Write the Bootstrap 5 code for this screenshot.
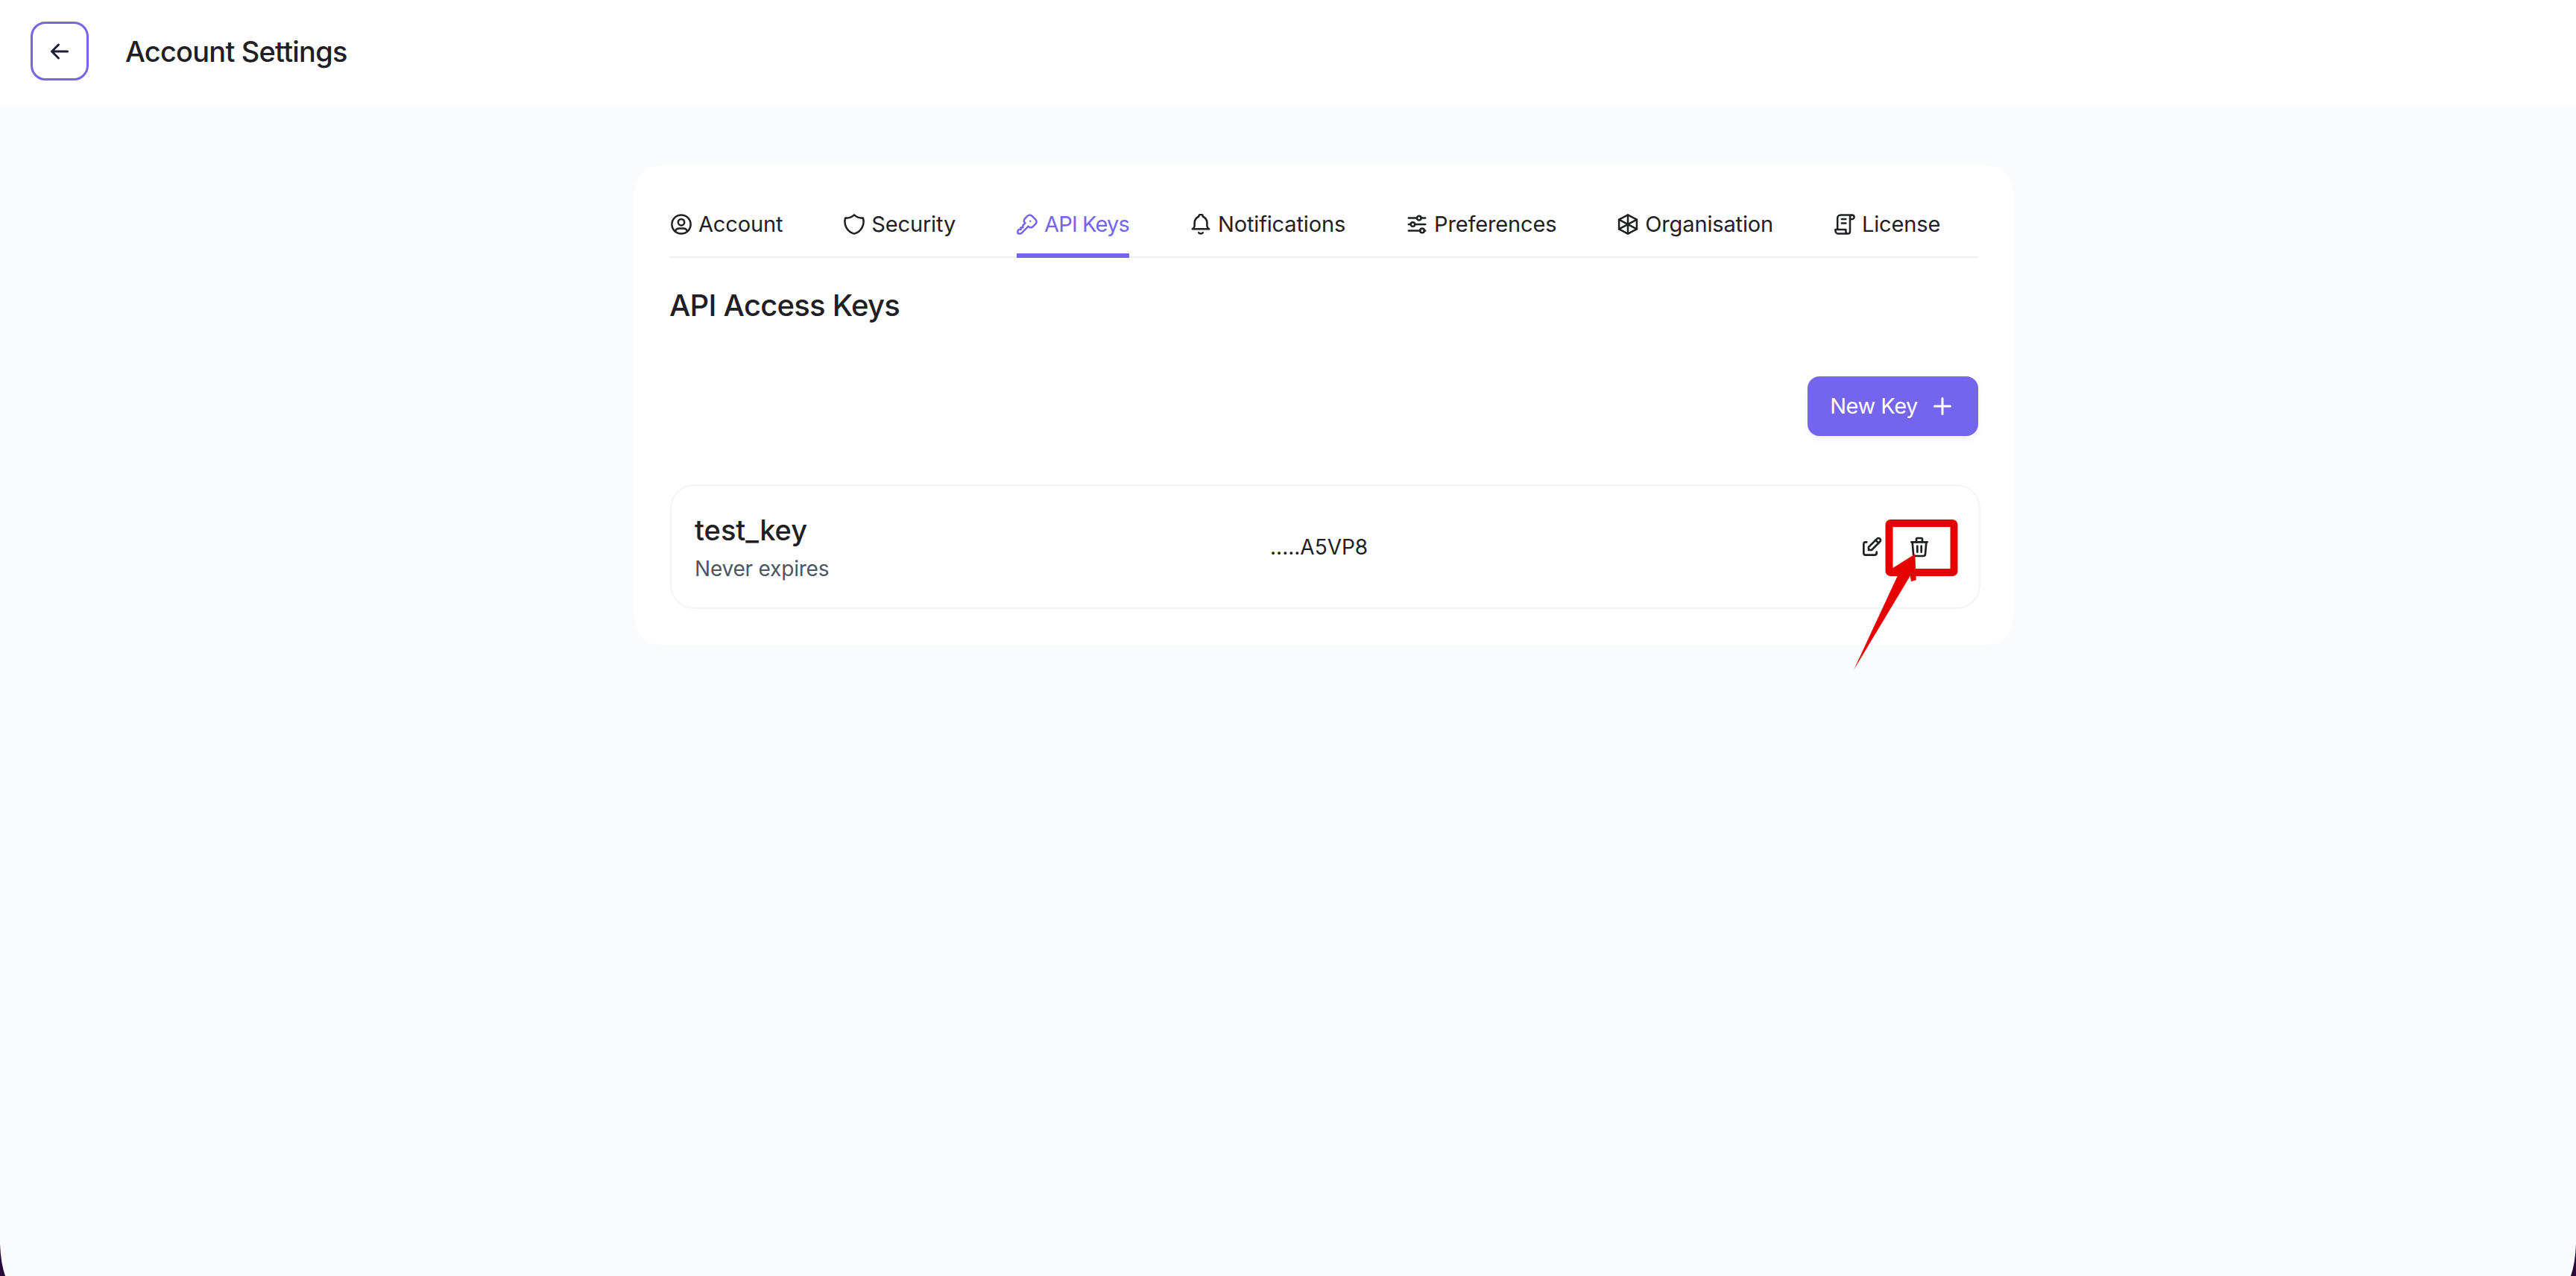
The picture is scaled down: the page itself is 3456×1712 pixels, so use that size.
<!DOCTYPE html>
<html lang="en">
<head>
  <meta charset="UTF-8">
  <meta name="viewport" content="width=device-width, initial-scale=1.0">
  <title>Account Settings</title>
  <link href="https://cdn.jsdelivr.net/npm/bootstrap@5.3.1/dist/css/bootstrap.min.css" rel="stylesheet">
  <style>
    body {
      background: #fafbfd;
      color: #1f2023;
      font-family: "Inter", "Liberation Sans", sans-serif;
      min-height: 1712px;
      overflow: hidden;
    }
    .ico {
      fill: none;
      stroke: currentColor;
      stroke-width: 2;
      stroke-linecap: round;
      stroke-linejoin: round;
      flex-shrink: 0;
    }
    .tab-ico {
      stroke-width: 1.8;
    }
    .top-bar {
      height: 141px;
      padding: 29px 0 0 41px;
      gap: 49px;
    }
    .back-btn {
      width: 78px;
      height: 79px;
      border: 3px solid #7565ec;
      border-radius: 20px;
      color: #1c2030;
      background: #fff;
    }
    .top-title {
      font-size: 38px;
      font-weight: 450;
      letter-spacing: -0.8px;
      line-height: 80px;
      margin: 0;
    }
    .page-wrap {
      padding: 81px 0 0 851px;
    }
    .panel-box {
      width: 1850px;
      height: 643px;
      background: #fff;
      border-radius: 36px;
      padding: 47px 47px 0 47px;
    }
    .tab-row {
      gap: 82px;
      padding-left: 2px;
      border-bottom: 2px solid #eff0f2;
    }
    .tab-link {
      display: flex;
      align-items: center;
      gap: 9px;
      height: 77px;
      padding-bottom: 8px;
      margin-bottom: -2px;
      border-bottom: 6px solid transparent;
      color: #1f2023;
      font-size: 29px;
      line-height: 40px;
      letter-spacing: -0.15px;
    }
    .tab-link.active {
      color: #7565ec;
      border-bottom-color: #7565ec;
      letter-spacing: -0.85px;
    }
    .panel-title {
      font-size: 40px;
      font-weight: 500;
      line-height: 48px;
      letter-spacing: -0.75px;
      margin: 40px 0 0;
    }
    .new-key {
      width: 229px;
      height: 80px;
      gap: 15px;
      margin-top: 71px;
      border: 0;
      border-radius: 16px;
      background: #7565ec;
      color: #fff;
      font-size: 29px;
      letter-spacing: -0.5px;
      box-shadow: 0 4px 8px rgba(117, 101, 236, .1);
    }
    .key-row {
      height: 167px;
      margin: 65px -3px 0 1px;
      padding: 0 64px 0 31px;
      border: 2px solid #f3f4f6;
      border-radius: 32px;
    }
    .key-info {
      width: 772px;
      padding-top: 4px;
    }
    .key-name {
      font-size: 38px;
      font-weight: 500;
      line-height: 44px;
    }
    .key-exp {
      font-size: 28px;
      line-height: 38px;
      letter-spacing: -0.2px;
      color: #4b5563;
      margin-top: 11px;
    }
    .key-val {
      font-size: 28px;
      line-height: 38px;
    }
    .row-actions {
      gap: 32px;
      color: #1f2023;
    }
    .marks {
      position: absolute;
      left: 0;
      top: 0;
      width: 3456px;
      height: 1712px;
      pointer-events: none;
    }
  </style>
</head>
<body>

<header class="top-bar d-flex align-items-start bg-white">
  <button class="back-btn d-flex align-items-center justify-content-center p-0" type="button" aria-label="Back">
    <svg class="ico" width="36" height="36" viewBox="0 0 24 24"><path d="M5 12h14M5 12l6 6M5 12l6-6"/></svg>
  </button>
  <h1 class="top-title">Account Settings</h1>
</header>

<div class="page-wrap">
  <div class="panel-box">
    <ul class="nav tab-row">
      <li><a class="tab-link text-decoration-none" href="#">
        <svg class="ico tab-ico" width="28" height="28" viewBox="2 2 20 20"><circle cx="12" cy="12" r="9"/><circle cx="12" cy="10" r="3"/><path d="M6.168 18.849a4 4 0 0 1 3.832-2.849h4a4 4 0 0 1 3.832 2.855"/></svg>
        Account</a></li>
      <li><a class="tab-link text-decoration-none" href="#">
        <svg class="ico tab-ico" width="28" height="28" viewBox="2 2 20 20"><path d="M12 3a12 12 0 0 0 8.500 3a12 12 0 0 1-8.500 15a12 12 0 0 1-8.500-15a12 12 0 0 0 8.500-3"/></svg>
        Security</a></li>
      <li><a class="tab-link active text-decoration-none" href="#">
        <svg class="ico tab-ico" width="28" height="28" viewBox="2 2 20 20"><path d="M16.555 3.843l3.602 3.602a2.877 2.877 0 0 1 0 4.069l-2.643 2.643a2.877 2.877 0 0 1-4.069 0l-.301-.301l-6.558 6.558a2 2 0 0 1-1.239 .578l-.175 .008h-1.172a1 1 0 0 1-.993-.883l-.007-.117v-1.172a2 2 0 0 1 .467-1.284l.119-.13l.414-.414h2v-2h2v-2l2.144-2.144l-.301-.301a2.877 2.877 0 0 1 0-4.069l2.643-2.643a2.877 2.877 0 0 1 4.069 0z"/><path d="M15 9h.01"/></svg>
        API Keys</a></li>
      <li><a class="tab-link text-decoration-none" href="#">
        <svg class="ico tab-ico" width="28" height="28" viewBox="2 2 20 20"><path d="M10 4.500a2 2 0 1 1 4 0a7 7 0 0 1 4 6v3a4 4 0 0 0 2 3h-16a4 4 0 0 0 2-3v-3a7 7 0 0 1 4-6"/><path d="M10 20a2.600 2.600 0 0 0 4 0"/></svg>
        Notifications</a></li>
      <li><a class="tab-link text-decoration-none" href="#">
        <svg class="ico tab-ico" width="28" height="28" viewBox="2 2 20 20"><circle cx="14" cy="6" r="2"/><path d="M4 6h8M16 6h4"/><circle cx="8" cy="12" r="2"/><path d="M4 12h2M10 12h10"/><circle cx="17" cy="18" r="2"/><path d="M4 18h11M19 18h1"/></svg>
        Preferences</a></li>
      <li><a class="tab-link text-decoration-none" href="#">
        <svg class="ico tab-ico" width="28" height="28" viewBox="2 2 20 20"><path d="M12 3l8.500 4.500v9L12 21l-8.500-4.500v-9z"/><path d="M12 3V21M3.500 7.500l17 9M20.500 7.500l-17 9"/></svg>
        Organisation</a></li>
      <li><a class="tab-link text-decoration-none" href="#">
        <svg class="ico tab-ico" width="28" height="28" viewBox="2 2 20 20"><path d="M15 21h-9a3 3 0 0 1-3-3v-1h10v2a2 2 0 0 0 4 0v-14a2 2 0 1 1 2 2h-2m2-4h-11a3 3 0 0 0-3 3v11"/><path d="M9 7h4M9 11h4"/></svg>
        License</a></li>
    </ul>

    <h2 class="panel-title">API Access Keys</h2>

    <div class="d-flex justify-content-end">
      <button class="new-key d-flex align-items-center justify-content-center p-0" type="button">
        New Key
        <svg class="ico" width="36" height="36" viewBox="0 0 24 24"><path d="M12 5v14M5 12h14"/></svg>
      </button>
    </div>

    <div class="key-row d-flex align-items-center">
      <div class="key-info">
        <div class="key-name">test_key</div>
        <div class="key-exp">Never expires</div>
      </div>
      <div class="key-val">.....A5VP8</div>
      <div class="row-actions d-flex align-items-center ms-auto">
        <svg class="ico" width="32" height="32" viewBox="0 0 24 24"><path d="M7 7h-1a2 2 0 0 0-2 2v9a2 2 0 0 0 2 2h9a2 2 0 0 0 2-2v-1"/><path d="M20.385 6.585a2.100 2.100 0 0 0-2.970-2.970l-8.415 8.385v3h3l8.385-8.415"/><path d="M16 5l3 3"/></svg>
        <svg class="ico" width="32" height="32" viewBox="0 0 24 24"><path d="M4 7h16M10 11v6M14 11v6"/><path d="M5 7l1 12a2 2 0 0 0 2 2h8a2 2 0 0 0 2-2l1-12"/><path d="M9 7v-3a1 1 0 0 1 1-1h4a1 1 0 0 1 1 1v3"/></svg>
      </div>
    </div>
  </div>
</div>

<!-- red annotation and the window's rounded corners lie over the page -->
<svg class="marks" viewBox="0 0 3456 1712">
  <rect x="2534.5" y="702" width="87" height="66" rx="2" fill="none" stroke="#e60000" stroke-width="10"/>
  <path d="M2569.300 743.300L2538.300 762.700L2540 770L2548.300 767.300L2487.300 898.300L2562.700 772.700L2564 780L2570.700 778.300z" fill="#e60000"/>
  <path d="M0 1669Q1 1695 7 1712H0z" fill="#2a0a3a"/>
  <path d="M3456 1669Q3455 1695 3449 1712H3456z" fill="#2a0a3a"/>
</svg>

</body>
</html>
